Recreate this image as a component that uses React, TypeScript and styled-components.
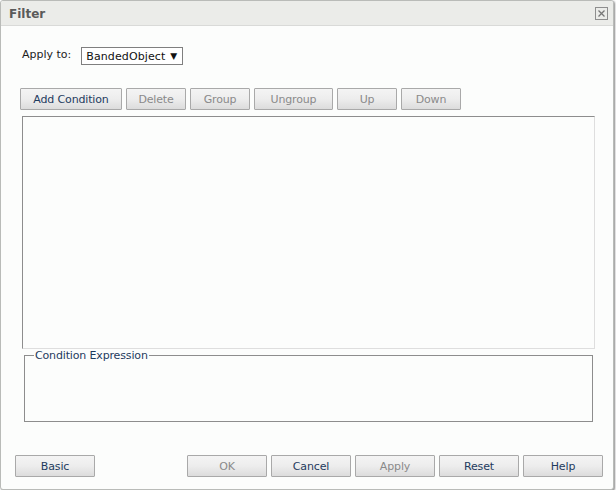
import React from "react";
import styled, { createGlobalStyle } from "styled-components";

const Global = createGlobalStyle`
  html, body { margin: 0; padding: 0; background: #ffffff; }
  body { font-family: Tahoma, "DejaVu Sans", Verdana, sans-serif; font-size: 11px; }
`;

const Window = styled.div`
  box-sizing: border-box;
  width: 614px;
  height: 490px;
  border: 1px solid #b9bbb8;
  border-radius: 3px;
  box-shadow: 1px 1px 2px rgba(0, 0, 0, 0.45);
  background: #fcfdfc;
  display: flex;
  flex-direction: column;
  overflow: hidden;
`;

const TitleBar = styled.div`
  height: 25px;
  box-sizing: border-box;
  background: #ebece9;
  border-bottom: 1px solid #d9dad8;
  display: flex;
  align-items: center;
  justify-content: space-between;
  padding: 1px 5px 0 8px;
`;

const Title = styled.span`
  font-weight: bold;
  font-size: 12px;
  color: #5a5a5a;
`;

const CloseBox = styled.div`
  width: 11px;
  height: 11px;
  border: 1px solid #8e8e8e;
  display: flex;
  align-items: center;
  justify-content: center;
`;

const Body = styled.div`
  flex: 1;
  display: flex;
  flex-direction: column;
  padding: 21px 19px 0 21px;
`;

const ApplyRow = styled.div`
  display: flex;
  align-items: center;
  gap: 10px;
  height: 18px;
`;

const Label = styled.span`
  color: #1c1c1c;
  font-size: 11px;
  margin-top: -3px;
`;

const Select = styled.div`
  box-sizing: border-box;
  width: 102px;
  height: 18px;
  border: 1px solid #7f7f7f;
  background: #fff;
  display: flex;
  align-items: center;
  justify-content: space-between;
  padding: 0 5px 0 4px;
  color: #111;
  font-size: 11px;
  letter-spacing: 0.1px;
`;

const Arrow = styled.span`
  font-size: 9px;
  color: #111;
`;

const Toolbar = styled.div`
  display: flex;
  gap: 4px;
  margin-top: 23px;
  margin-left: -2px;
`;

const Button = styled.button<{ $w: number; $disabled?: boolean }>`
  box-sizing: border-box;
  width: ${(p) => p.$w}px;
  height: 22px;
  border: 1px solid #a9a9a9;
  border-radius: 1px;
  background: linear-gradient(#f4f4f4 0%, #ededed 50%, #dcdcdc 100%);
  font-family: Tahoma, "DejaVu Sans", Verdana, sans-serif;
  font-size: 11px;
  letter-spacing: -0.15px;
  color: ${(p) => (p.$disabled ? "#8a8a8a" : "#1e3b5e")};
  padding: 0;
  cursor: default;
`;

const ListBox = styled.div`
  box-sizing: border-box;
  margin-top: 6px;
  height: 233px;
  width: 573px;
  border-top: 1px solid #8d8d8d;
  border-left: 1px solid #8d8d8d;
  border-right: 1px solid #dedede;
  border-bottom: 1px solid #dedede;
  background: #fcfdfc;
`;

const Fieldset = styled.fieldset`
  box-sizing: border-box;
  margin: 0 0 0 2px;
  width: 569px;
  height: 73px;
  padding: 0;
  border: 1px solid #8d8d8d;
`;

const Legend = styled.legend`
  margin-left: 9px;
  padding: 0 1px;
  color: #1e3b5e;
  font-size: 11px;
  letter-spacing: -0.15px;
`;

const Footer = styled.div`
  display: flex;
  justify-content: space-between;
  padding: 0 10px 12px 14px;
`;

const Group = styled.div`
  display: flex;
  gap: 4px;
`;

export default function App() {
  return (
    <>
      <Global />
      <Window>
        <TitleBar>
          <Title>Filter</Title>
          <CloseBox>
            <svg width="7" height="7" viewBox="0 0 7 7">
              <path d="M0.5 0.5 L6.5 6.5 M6.5 0.5 L0.5 6.5" stroke="#777" strokeWidth="1.3" />
            </svg>
          </CloseBox>
        </TitleBar>
        <Body>
          <ApplyRow>
            <Label>Apply to:</Label>
            <Select>
              <span>BandedObject</span>
              <Arrow>▼</Arrow>
            </Select>
          </ApplyRow>
          <Toolbar>
            <Button $w={102}>Add Condition</Button>
            <Button $w={60} $disabled>Delete</Button>
            <Button $w={60} $disabled>Group</Button>
            <Button $w={79} $disabled>Ungroup</Button>
            <Button $w={60} $disabled>Up</Button>
            <Button $w={60} $disabled>Down</Button>
          </Toolbar>
          <ListBox />
          <Fieldset>
            <Legend>Condition Expression</Legend>
          </Fieldset>
        </Body>
        <Footer>
          <Button $w={80}>Basic</Button>
          <Group>
            <Button $w={80} $disabled>OK</Button>
            <Button $w={80}>Cancel</Button>
            <Button $w={80} $disabled>Apply</Button>
            <Button $w={80}>Reset</Button>
            <Button $w={80}>Help</Button>
          </Group>
        </Footer>
      </Window>
    </>
  );
}
